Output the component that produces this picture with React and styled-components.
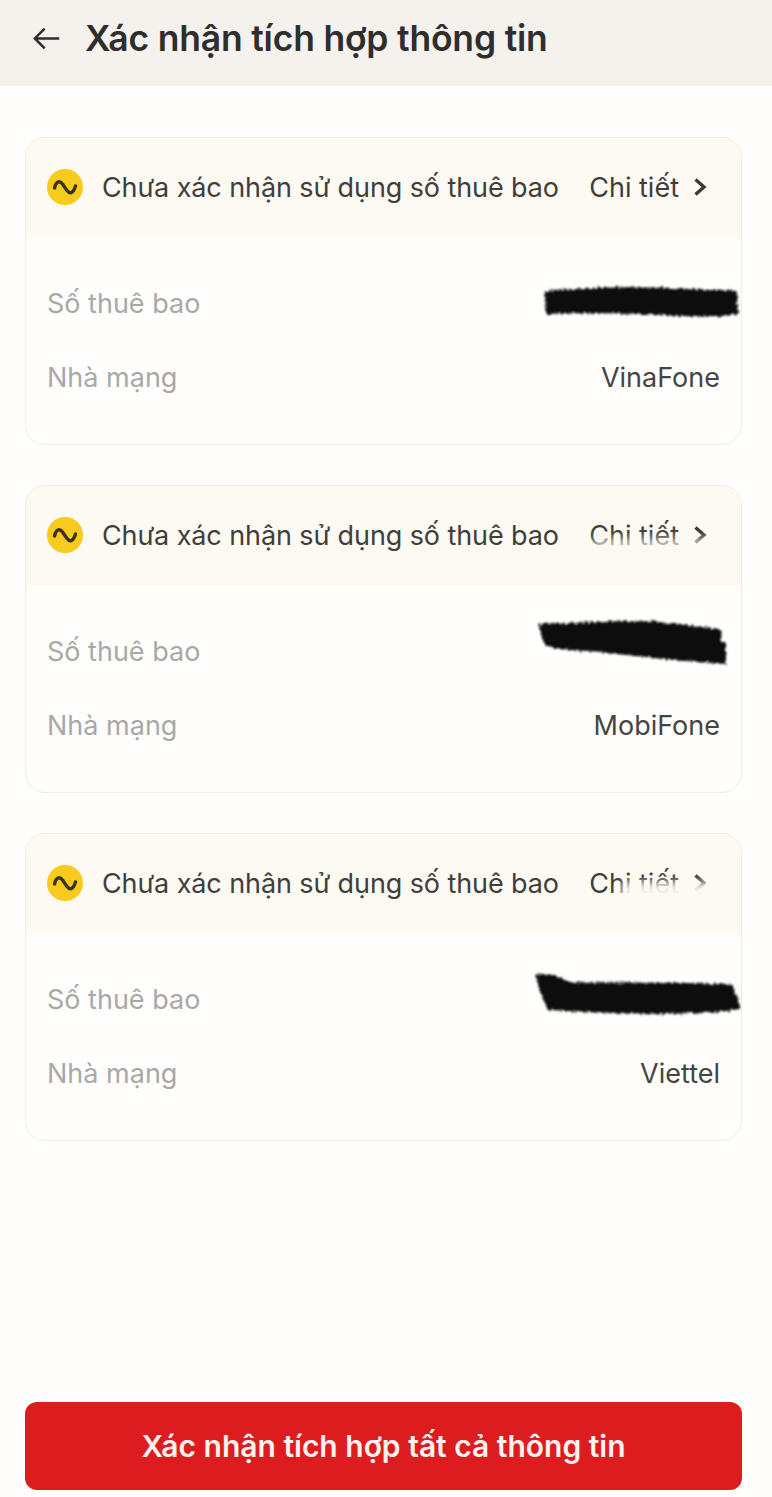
import React from 'react';
import styled, { createGlobalStyle } from 'styled-components';

const cards = [
  {
    carrier: 'VinaFone',
    smudge: 0,
    scribble: { left: 518, top: 147, width: 194, height: 34, d: 'M1 6 C40 3 80 1 120 3 C150 5 175 4 193 6 L194 29 C170 33 150 32 120 30 C80 28 40 28 2 29 Z' },
  },
  {
    carrier: 'MobiFone',
    smudge: 1,
    scribble: { left: 511, top: 134, width: 190, height: 46, d: 'M1 4 C40 3 90 0 122 2 C140 4 158 6 184 10 L184 22 L189 23 L189 44 C150 42 110 37 70 33 C45 30 25 31 8 26 Z' },
  },
  {
    carrier: 'Viettel',
    smudge: 2,
    scribble: { left: 508, top: 138, width: 208, height: 44, d: 'M1 3 C12 1 24 3 34 10 C70 11 130 10 198 12 L207 37 C160 44 90 42 14 38 L8 24 Z' },
  },
];

const App = () => (
  <Page>
    <GlobalStyle />
    <Header>
      <BackIcon viewBox="0 0 32 32" aria-hidden="true">
        <path d="M29 16.5H3.5M13.5 6 3 16.5 13.5 27" />
      </BackIcon>
      <Title>Xác nhận tích hợp thông tin</Title>
    </Header>

    <CardList>
      {cards.map((card) => (
        <Card key={card.carrier}>
          <CardHead>
            <StatusIcon viewBox="0 0 36 36" aria-hidden="true">
              <circle cx="18" cy="18" r="18" fill="#f8cb1c" />
              <path d="M7.5 19C9 12.500 12.500 11 15.500 15L20 21.500c3 4 6.500 2.500 8.500-4.500" />
            </StatusIcon>
            <StatusText>Chưa xác nhận sử dụng số thuê bao</StatusText>
            <DetailLink>
              Chi tiết
              <ChevronIcon viewBox="0 0 14 20" aria-hidden="true">
                <path d="M2.500 2.500 11 10l-8.500 7.500" />
              </ChevronIcon>
            </DetailLink>
            {card.smudge > 0 && <Smudge $level={card.smudge} />}
          </CardHead>
          <CardBody>
            <Row>
              <RowLabel>Số thuê bao</RowLabel>
            </Row>
            <Row>
              <RowLabel>Nhà mạng</RowLabel>
              <RowValue>{card.carrier}</RowValue>
            </Row>
          </CardBody>
          <Scribble
            viewBox={`0 0 ${card.scribble.width} ${card.scribble.height}`}
            width={card.scribble.width}
            height={card.scribble.height}
            style={{ left: card.scribble.left, top: card.scribble.top }}
            aria-hidden="true"
          >
            <filter id={`rough-${card.carrier}`} x="-5%" y="-30%" width="110%" height="160%">
              <feTurbulence type="fractalNoise" baseFrequency="0.35" numOctaves="2" seed="4" />
              <feDisplacementMap in="SourceGraphic" scale="6" />
              <feGaussianBlur stdDeviation="0.8" />
            </filter>
            <path d={card.scribble.d} filter={`url(#rough-${card.carrier})`} />
          </Scribble>
        </Card>
      ))}
    </CardList>

    <SubmitButton type="button">Xác nhận tích hợp tất cả thông tin</SubmitButton>
  </Page>
);

export default App;

const GlobalStyle = createGlobalStyle`
  html, body {
    margin: 0;
    padding: 0;
    background: #fff;
  }
`;

const Page = styled.div`
  width: 772px;
  height: 1497px;
  display: flex;
  flex-direction: column;
  background: #fffefd;
  font-family: Inter, 'Liberation Sans', sans-serif;
  overflow: hidden;
`;

const Header = styled.header`
  height: 86px;
  flex: none;
  display: flex;
  align-items: center;
  gap: 23px;
  padding: 0 32px 10px;
  box-sizing: border-box;
  background: #f5f2ee;
`;

const BackIcon = styled.svg`
  width: 30px;
  height: 30px;
  flex: none;

  path {
    fill: none;
    stroke: #2f2d2c;
    stroke-width: 2.6;
  }
`;

const Title = styled.h1`
  margin: 0;
  font-size: 35.5px;
  font-weight: 600;
  letter-spacing: -0.2px;
  color: #302e2d;
`;

const CardList = styled.main`
  display: flex;
  flex-direction: column;
  gap: 40px;
  padding: 51px 30px 0 25px;
  flex: 1;
`;

const Card = styled.section`
  position: relative;
  height: 308px;
  box-sizing: border-box;
  border: 1.5px solid #f3ecdd;
  border-radius: 20px;
  overflow: hidden;
  background: #fffefd;
`;

const CardHead = styled.div`
  position: relative;
  height: 100px;
  box-sizing: border-box;
  display: flex;
  align-items: center;
  gap: 19px;
  padding: 0 34px 2px 21px;
  background: #fdf9f3;
`;

const StatusIcon = styled.svg`
  width: 36px;
  height: 36px;
  flex: none;

  path {
    fill: none;
    stroke: #3d3420;
    stroke-width: 3.4;
    stroke-linecap: round;
  }
`;

const StatusText = styled.span`
  flex: 1;
  font-size: 27px;
  letter-spacing: -0.1px;
  color: #403e3c;
  white-space: nowrap;
`;

const DetailLink = styled.span`
  display: flex;
  align-items: center;
  gap: 14px;
  font-size: 27px;
  color: #403e3c;
  white-space: nowrap;
`;

const ChevronIcon = styled.svg`
  width: 14px;
  height: 20px;

  path {
    fill: none;
    stroke: #3c3a38;
    stroke-width: 3.4;
  }
`;

const Smudge = styled.div`
  position: absolute;
  right: 20px;
  top: ${(p) => (p.$level > 1 ? '48px' : '52px')};
  width: ${(p) => (p.$level > 1 ? '100px' : '130px')};
  height: ${(p) => (p.$level > 1 ? '20px' : '14px')};
  background: #fdf9f3;
  opacity: ${(p) => (p.$level > 1 ? 0.95 : 0.7)};
  filter: blur(4px);
`;

const CardBody = styled.div`
  display: flex;
  flex-direction: column;
  gap: 28px;
  padding: 42px 21px 0;
`;

const Row = styled.div`
  height: 46px;
  display: flex;
  align-items: center;
  justify-content: space-between;
  font-size: 27px;
`;

const RowLabel = styled.span`
  color: #a9a8a6;
`;

const RowValue = styled.span`
  color: #464442;
`;

const Scribble = styled.svg`
  position: absolute;
  overflow: visible;

  path {
    fill: #0b0b0b;
  }
`;

const SubmitButton = styled.button`
  flex: none;
  width: 717px;
  height: 88px;
  margin: 0 0 7px 25px;
  border: 0;
  border-radius: 12px;
  background: #dc1c1e;
  color: #fdf2f0;
  font-family: inherit;
  font-size: 30px;
  font-weight: 600;
`;
